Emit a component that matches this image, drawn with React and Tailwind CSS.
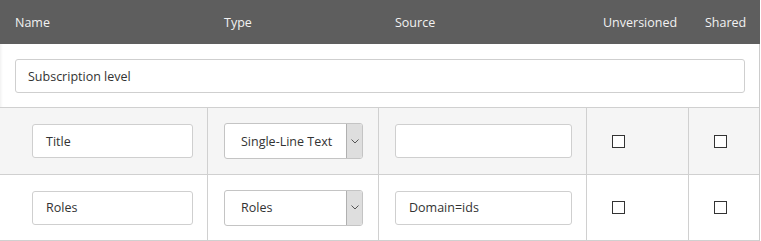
import React from "react";

const font = { fontFamily: '"Open Sans", "Noto Sans", sans-serif' };

function TextInput({ value, w, pl = "pl-[13px]" }) {
  return (
    <div
      className={`h-[34px] ${w} border border-[#cfcfcf] rounded-[3px] bg-white flex items-center pt-[2px] ${pl} text-[12.5px] text-[#333]`}
    >
      {value}
    </div>
  );
}

function Select({ value }) {
  return (
    <div className="h-[36px] w-[139px] border border-[#c4c4c4] rounded-[3px] bg-white flex items-stretch text-[12.5px] text-[#333]">
      <div className="flex-1 flex items-center pt-[2px] pl-[16px]">{value}</div>
      <div className="w-[16px] bg-[#dedede] border-l border-[#b0b0b0] flex items-center justify-center rounded-r-[2px]">
        <svg width="8" height="5" viewBox="0 0 8 5">
          <path d="M0.5 0.5 L4 4 L7.5 0.5" fill="none" stroke="#555" strokeWidth="1" />
        </svg>
      </div>
    </div>
  );
}

function Checkbox() {
  return <div className="w-[13px] h-[13px] border border-[#333] bg-white" />;
}

function Row({ name, type, source, bg, h }) {
  return (
    <div className={`grid grid-cols-[208px_171px_208px_102px_71px] border-b border-[#d0d0d0] ${bg} ${h}`}>
      <div className="border-r border-[#d0d0d0] flex items-center pl-[32px]">
        <TextInput value={name} w="w-[161px]" />
      </div>
      <div className="border-r border-[#d0d0d0] flex items-center pl-[16px]">
        <Select value={type} />
      </div>
      <div className="border-r border-[#d0d0d0] flex items-center pl-[16px]">
        <TextInput value={source} w="w-[177px]" />
      </div>
      <div className="border-r border-[#d0d0d0] flex items-center pl-[25px]">
        <Checkbox />
      </div>
      <div className="flex items-center pl-[25px]">
        <Checkbox />
      </div>
    </div>
  );
}

export default function App() {
  return (
    <div style={font} className="w-[761px] h-[241px] bg-white overflow-hidden">
      <div className="w-[760px] border-r border-[#cccccc] shadow-[inset_3px_0_3px_-2px_rgba(0,0,0,0.07)]">
        <div className="h-[44px] pt-[3px] bg-[#5e5e5e] grid grid-cols-[208px_171px_208px_102px_71px] items-center text-[12.5px] text-[#f2f2f2] mr-[-1px]">
          <div className="pl-[15px]">Name</div>
          <div className="pl-[16px]">Type</div>
          <div className="pl-[16px]">Source</div>
          <div className="pl-[16px]">Unversioned</div>
          <div className="pl-[16px]">Shared</div>
        </div>
        <div className="h-[64px] border-b border-[#d0d0d0] pt-[15px] pl-[15px]">
          <div className="h-[34px] w-[730px] border border-[#cfcfcf] rounded-[3px] bg-white flex items-center pt-[2px] pl-[12px] text-[12.5px] text-[#333]">
            Subscription level
          </div>
        </div>
        <Row name="Title" type="Single-Line Text" source="" bg="bg-[#f5f5f5]" h="h-[67px]" />
        <Row name="Roles" type="Roles" source="Domain=ids" bg="bg-white" h="h-[66px]" />
      </div>
    </div>
  );
}
